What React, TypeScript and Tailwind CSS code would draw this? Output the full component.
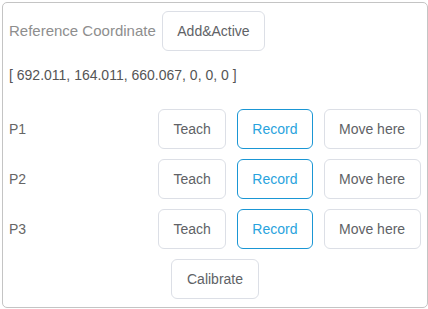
const font = { fontFamily: '"Liberation Sans", Arial, sans-serif' }

function Btn({ label, active = false }: { label: string; active?: boolean }) {
  return (
    <button
      className={
        active
          ? "h-10 shrink-0 whitespace-nowrap rounded-md border border-[#1a96d4] bg-white px-[14.5px] text-sm text-[#29a3dd]"
          : "h-10 shrink-0 whitespace-nowrap rounded-md border border-[#dcdfe6] bg-white px-[14.5px] text-sm text-[#606266]"
      }
    >
      {label}
    </button>
  )
}

export default function App() {
  const points = ["P1", "P2", "P3"]
  return (
    <div className="bg-white pl-[2px] pt-[2px]" style={font}>
      <div className="h-[306px] w-[426px] rounded-[5px] border border-[#c4c4c4] px-[6px] pt-2">
        <div className="flex items-center">
          <span className="text-[15px] text-[#8e8e8e]">Reference Coordinate</span>
          <div className="ml-[6px]">
            <Btn label="Add&Active" />
          </div>
        </div>
        <div className="mt-[14px] text-sm leading-5 text-[#555]">
          [ 692.011, 164.011, 660.067, 0, 0, 0 ]
        </div>
        <div className="mt-[24px] flex flex-col gap-[10px]">
          {points.map((p) => (
            <div key={p} className="flex items-center">
              <span className="w-[149px] shrink-0 text-sm text-[#666]">{p}</span>
              <div className="flex gap-[10.5px]">
                <Btn label="Teach" />
                <Btn label="Record" active />
                <Btn label="Move here" />
              </div>
            </div>
          ))}
          <div className="flex justify-center">
            <Btn label="Calibrate" />
          </div>
        </div>
      </div>
    </div>
  )
}
